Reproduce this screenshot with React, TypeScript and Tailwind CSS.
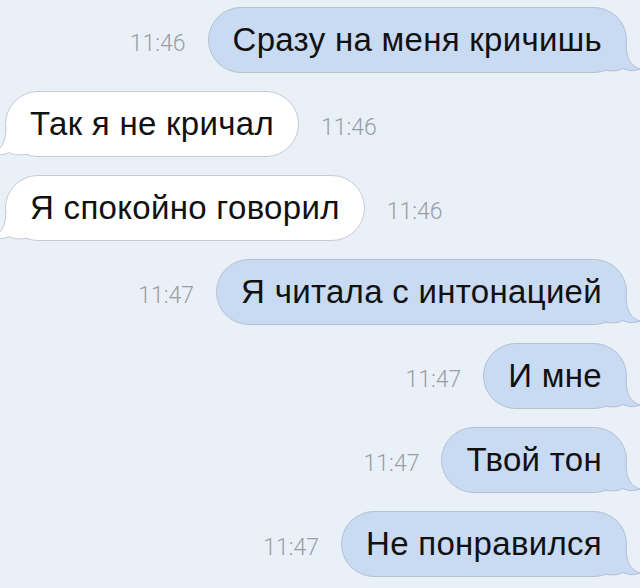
import type { ReactNode } from 'react'

type Msg = { out: boolean; text: string; time: string }

const messages: Msg[] = [
  { out: true, text: 'Сразу на меня кричишь', time: '11:46' },
  { out: false, text: 'Так я не кричал', time: '11:46' },
  { out: false, text: 'Я спокойно говорил', time: '11:46' },
  { out: true, text: 'Я читала с интонацией', time: '11:47' },
  { out: true, text: 'И мне', time: '11:47' },
  { out: true, text: 'Твой тон', time: '11:47' },
  { out: true, text: 'Не понравился', time: '11:47' },
]

function Tail({ fill, stroke, left }: { fill: string; stroke: string; left?: boolean }) {
  return (
    <svg
      width="40"
      height="30"
      viewBox="0 0 40 30"
      className={
        left
          ? 'absolute left-[-16px] bottom-[-1px] -scale-x-100'
          : 'absolute right-[-16px] bottom-[-1px]'
      }
    >
      <path
        d="M24 0 C24 14 28 23 38 26 C32 28.5 26 28 21 25.5 C17 28 10 28.5 2 27.1 L2 0 Z"
        fill={fill}
      />
      <path
        d="M24 0 C24 14 28 23 38 26 C32 28.5 26 28 21 25.5 C17 28 10 28.5 2 27.1"
        fill="none"
        stroke={stroke}
        strokeWidth="1"
      />
    </svg>
  )
}

function Bubble({ out, children }: { out: boolean; children: ReactNode }) {
  const fill = out ? '#c9dbf3' : '#ffffff'
  const stroke = out ? '#b3c1d1' : '#c6cbd2'
  return (
    <div
      className={`relative flex items-center h-[66px] px-[24px] rounded-full border ${
        out ? 'bg-[#c9dbf3] border-[#b3c1d1]' : 'bg-white border-[#c6cbd2]'
      }`}
    >
      <span className="text-[33px] tracking-[0.3px] text-[#111111] whitespace-nowrap">
        {children}
      </span>
      <Tail fill={fill} stroke={stroke} left={!out} />
    </div>
  )
}

function Time({ children }: { children: ReactNode }) {
  return (
    <span className="text-[23px] font-light text-[#999ea5] font-['Roboto',sans-serif]">
      {children}
    </span>
  )
}

export default function App() {
  return (
    <main className="w-[640px] h-[588px] overflow-hidden bg-[#e9f0f8] font-['Liberation_Sans',Arial,sans-serif]">
      <div className="flex flex-col gap-[18px] pt-[7px]">
        {messages.map((m, i) =>
          m.out ? (
            <div key={i} className="flex items-baseline justify-end gap-[22px] pr-[13px]">
              <Time>{m.time}</Time>
              <Bubble out>{m.text}</Bubble>
            </div>
          ) : (
            <div key={i} className="flex items-baseline justify-start gap-[22px] pl-[5px]">
              <Bubble out={false}>{m.text}</Bubble>
              <Time>{m.time}</Time>
            </div>
          ),
        )}
      </div>
    </main>
  )
}
